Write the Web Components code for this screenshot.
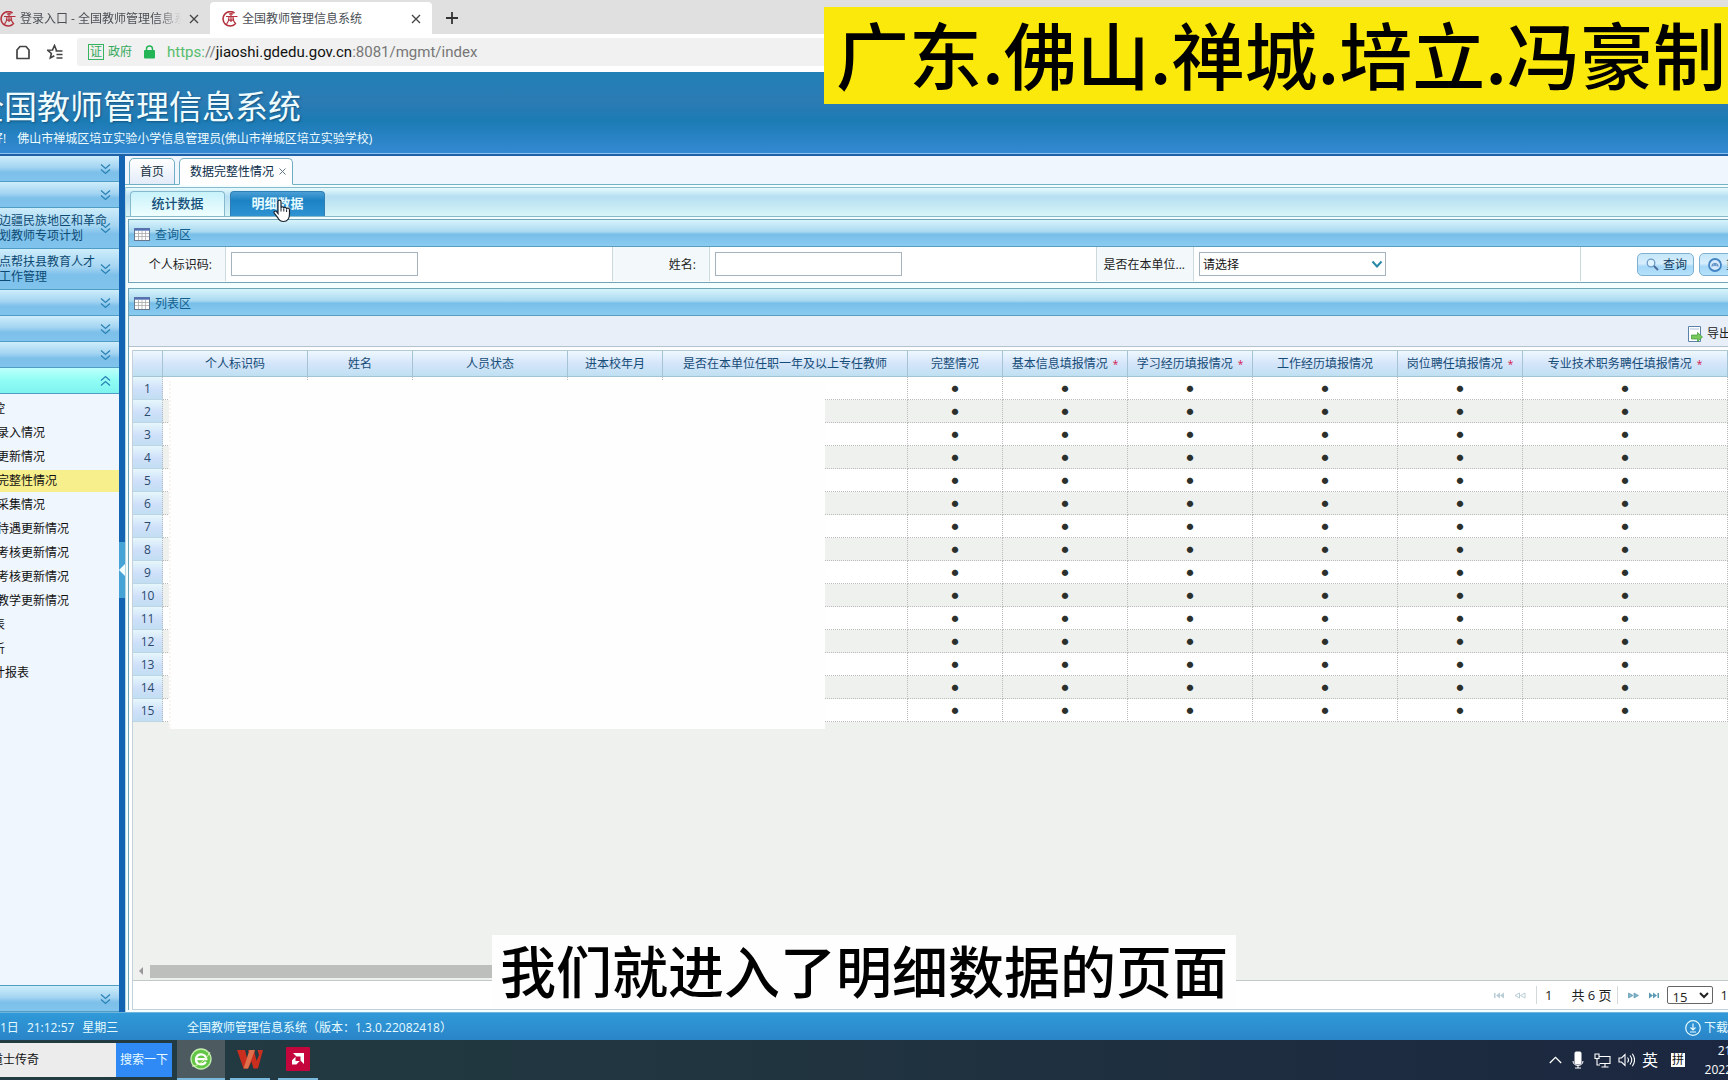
<!DOCTYPE html>
<html lang="zh-CN">
<head>
<meta charset="utf-8">
<title>全国教师管理信息系统</title>
<style>
  html, body { margin: 0; height: 100%; overflow: hidden; }
  body { font: 12px/16px "Open Sans", "Noto Sans CJK SC", sans-serif; color: #111; }
</style>
</head>
<body>
<desk-screen></desk-screen>
<script>
const define = (name, html, setup) => {
  const template = document.createElement('template');
  template.innerHTML = `<style>
    *, *::before, *::after { box-sizing: border-box; }
    :host { display: block; box-sizing: border-box; }
    :host([hidden]) { display: none; }
    button, input, select { font: inherit; color: inherit; margin: 0; }
    a { color: inherit; text-decoration: none; }
    svg { display: block; flex: none; }
  </style>` + html;
  customElements.define(name, class extends HTMLElement {
    constructor() {
      super();
      this.attachShadow({ mode: 'open' }).append(template.content.cloneNode(true));
    }
    connectedCallback() { if (setup) setup(this.shadowRoot, this); }
  });
};

/* ---------- browser chrome ---------- */
define('site-badge', `<style>:host { width: 16px; height: 16px; flex: none; }</style>
  <svg width="16" height="16" viewBox="0 0 16 16" fill="none" stroke="#b3303c">
    <path d="M12.500 2A7.200 7.200 0 1 0 13.200 13" stroke-width="1.600"/>
    <path d="M4 5.500h11.500M7 3.200q2-1.200 4 0M9 3v2.500M7 6q0 4.500-2.400 7M11 6q0 4.500 3 7M6.500 9.200h5M9 6v5" stroke-width="1.200"/>
  </svg>`);

define('browser-tab', `<style>
    :host { display: flex; align-items: center; gap: 4px; height: 32px; padding: 2px 7px 0 0; color: #4b4f55; }
    :host([active]) { background: #fff; border-radius: 4px 4px 0 0; padding: 2px 7px 0 12px; }
    .name { flex: 1; overflow: hidden; white-space: nowrap; }
    :host([fade]) .name { -webkit-mask-image: linear-gradient(to right, #000 86%, transparent); mask-image: linear-gradient(to right, #000 86%, transparent); }
    button { border: 0; background: none; padding: 4px; }
  </style>
  <site-badge></site-badge><span class="name"><slot></slot></span>
  <button aria-label="关闭"><svg width="10" height="10" viewBox="0 0 10 10" stroke="#444" stroke-width="1.3"><path d="M1 1l8 8M9 1l-8 8"/></svg></button>`);

define('browser-bar', `<style>
    :host { background: #fff; flex: none; }
    .tabs { height: 34px; background: #e0e0e0; display: flex; align-items: flex-end; }
    .tabs browser-tab { width: 210px; }
    .tabs browser-tab[active] { width: 222px; }
    .add { border: 0; background: none; height: 32px; padding: 0 14px; }
    .nav { height: 38px; display: flex; align-items: center; padding-bottom: 2px; }
    .icons { display: flex; gap: 16px; padding: 0 14px 0 15px; }
    .icons button { border: 0; background: none; padding: 0; }
    .url { flex: 1; height: 28px; background: #f0f1f0; border-radius: 3px; display: flex; align-items: center; padding: 0 11px; color: #37a95c; }
    .cert { border: 1px solid #37b45f; width: 16px; height: 16px; line-height: 14px; text-align: center; margin-right: 4px; }
    .lock { margin: 0 12px; }
    .addr { font-family: Roboto, sans-serif; font-size: 15px; line-height: 20px; color: #777; }
    .addr i { font-style: normal; color: #55bd6d; }
    .addr b { font-weight: 400; color: #111; }
  </style>
  <div class="tabs">
    <browser-tab fade>登录入口 - 全国教师管理信息系</browser-tab>
    <browser-tab active>全国教师管理信息系统</browser-tab>
    <button class="add" aria-label="新标签页"><svg width="12" height="12" viewBox="0 0 12 12" stroke="#333" stroke-width="1.8"><path d="M6 0v12M0 6h12"/></svg></button>
  </div>
  <div class="nav">
    <div class="icons">
      <button aria-label="主页"><svg width="16" height="16" viewBox="0 0 16 16" fill="none" stroke="#444" stroke-width="1.7" stroke-linejoin="round"><path d="M2 14.500V6L5 2.500h6L14 6v8.500z"/></svg></button>
      <button aria-label="收藏"><svg width="16" height="16" viewBox="0 0 16 16" fill="none" stroke="#444" stroke-width="1.6"><path d="M9.500 6.500 7.500 1.500 5.500 6 .8 6.300l3.600 3.200L3.300 14l4-2.300M8.500 7h7M9.500 10.500h6M9.500 14h6"/></svg></button>
    </div>
    <div class="url">
      <span class="cert">证</span><span>政府</span>
      <svg class="lock" width="11" height="14" viewBox="0 0 11 14"><rect y="5" width="11" height="8.500" rx="1" fill="#22b455"/><path d="M2.500 6V4a3 3 0 0 1 6 0v2" fill="none" stroke="#22b455" stroke-width="1.400"/></svg>
      <span class="addr"><i>https:</i>//<b>jiaoshi.gdedu.gov.cn</b>:8081/mgmt/index</span>
    </div>
  </div>`);

/* ---------- application header ---------- */
define('app-header', `<style>
    :host { flex: none; height: 84px; color: #effcff; overflow: hidden; white-space: nowrap; border-bottom: 2px solid #2060a6; box-shadow: inset 0 -1px #8cc4f0;
      background: linear-gradient(#2080b6, #2c7bb4 35%, #1c7bb4 60%, #3489d2 98%); }
    h1 { margin: 14px 0 0 -29px; font-size: 33px; line-height: 42px; font-weight: 400; text-shadow: 1px 1px 2px #145580; }
    p { margin: 2px 0 0 -9px; display: flex; gap: 11px; line-height: 18px; }
  </style>
  <h1>全国教师管理信息系统</h1>
  <p><span>好!</span><span>佛山市禅城区培立实验小学信息管理员(佛山市禅城区培立实验学校)</span></p>`);

/* ---------- side navigation ---------- */
define('nav-group', `<style>
    :host { flex: none; }
    button { display: flex; align-items: center; width: 100%; height: 26px; padding: 0 8px 0 0; border: 0; border-bottom: 1px solid #4f9cc4; overflow: hidden;
      background: linear-gradient(#cdedfb, #a5d5f2 45%, #7dc0ea 65%, #80c4ee); color: #0d4a73; text-align: left; line-height: 15px; }
    :host([tall]) button { height: 41px; }
    :host([open]) button { background: linear-gradient(#bdfffb, #8ffdf5 50%, #80f3ef); }
    :host([open]) svg { transform: scaleY(-1); }
    span { flex: 1; margin: 0 -12px 0 -1px; white-space: nowrap; }
  </style>
  <button><span><slot></slot></span><svg width="11" height="12" viewBox="0 0 11 12" fill="none" stroke="#2b82b5" stroke-width="1.300"><path d="M1 1.500l4.500 4 4.500-4M1 6.500l4.500 4 4.500-4"/></svg></button>`);

define('nav-item', `<style>
    :host { height: 24px; flex: none; padding-top: 1px; }
    a { display: block; height: 22px; line-height: 22px; color: #111; white-space: nowrap; overflow: hidden; }
    :host([current]) a { background: #f7ee8c; }
    span { margin-left: -3px; }
    :host([top]) span { margin-left: -7px; }
  </style><a href="#"><span><slot></slot></span></a>`);

define('side-nav', `<style>
    :host { display: flex; flex-direction: column; width: 119px; background: #f0f6fd; overflow: hidden; flex: none; }
    nav { flex: 1; padding-top: 3px; }
    nav + nav-group { border-top: 1px solid #4f9cc4; }
  </style>
  <nav-group></nav-group><nav-group></nav-group>
  <nav-group tall>边疆民族地区和革命<br>划教师专项计划</nav-group>
  <nav-group tall>点帮扶县教育人才<br>工作管理</nav-group>
  <nav-group></nav-group><nav-group></nav-group><nav-group></nav-group><nav-group open></nav-group>
  <nav>
    <nav-item top>控</nav-item><nav-item>录入情况</nav-item><nav-item>更新情况</nav-item>
    <nav-item current>完整性情况</nav-item><nav-item>采集情况</nav-item><nav-item>待遇更新情况</nav-item>
    <nav-item>考核更新情况</nav-item><nav-item>考核更新情况</nav-item><nav-item>教学更新情况</nav-item>
    <nav-item top>表</nav-item><nav-item top>析</nav-item><nav-item top>计报表</nav-item>
  </nav>
  <nav-group></nav-group>`);

define('split-bar', `<style>
    :host { display: flex; align-items: center; width: 6px; background: #1263b2; flex: none; }
    button { width: 6px; height: 56px; margin-bottom: 28px; padding: 0; border: 0; background: #45a3d6; margin-top: 0; }
  </style>
  <button aria-label="收起菜单"><svg width="6" height="12" viewBox="0 0 6 12"><path d="M0 6l6-6v12z" fill="#f2ffff"/></svg></button>`);

/* ---------- tabs above the page ---------- */
define('page-tabs', `<style>
    :host { display: flex; gap: 4px; height: 29px; padding: 2px 0 0 4px; background: #f0f6fd; border-bottom: 1px solid #70b3c4; flex: none; }
    button { height: 27px; padding: 0 10px; border: 1px solid #70aec4; border-radius: 5px 5px 0 0; background: linear-gradient(#fff, #e3ebf9); color: #17303f; display: flex; align-items: center; gap: 5px; }
    .on { background: #fff; border-bottom-color: #fff; padding: 0 6px 0 10px; color: #082b48; }
    svg { stroke: #678; }
  </style>
  <button>首页</button>
  <button class="on">数据完整性情况<svg width="7" height="7" viewBox="0 0 7 7"><path d="M.5.5l6 6M6.500.5l-6 6"/></svg></button>`);

define('view-tabs', `<style>
    :host { display: flex; gap: 5px; height: 30px; padding: 3px 0 0 4px; flex: none; border-top: 1px solid #86b9cc; border-bottom: 1px solid #86b9cc;
      background: linear-gradient(#e8fbfd, #b6dff2 30%, #c8ebf5 70%, #d8f5f8); position: relative; }
    button { width: 95px; height: 25px; padding: 0 0 2px; border: 1px solid #86b9cc; border-bottom: 0; border-radius: 4px 4px 0 0; font-size: 13px; font-weight: 500; background: linear-gradient(#c8f2fb, #effefe); color: #15507a; }
    .on { background: linear-gradient(#4c9fd6, #1c82c4 35%, #2f93d2); border-color: #2f7fb4; color: #e6fbff; font-weight: 700; }
    .hand { position: absolute; left: 147px; top: 11px; z-index: 2; }
  </style>
  <button>统计数据</button><button class="on">明细数据</button>
  <svg class="hand" width="18" height="24" viewBox="0 0 18 24"><path d="M5 14.500V2.500C5 .6 8 .6 8 2.500V9c0-1.700 2.800-1.500 2.800.3 0-1.500 2.800-1.300 2.800.6 0-1.300 2.900-1.200 2.900.8V15c0 4-1.700 7.500-6 7.500-3.500 0-4.800-1.800-6-4.200L1.200 14c-.8-1.700 1.400-2.700 2.400-1.300z" fill="#fff" stroke="#1a2430" stroke-width="1.200"/><path d="M8 9v3.500M10.800 9.500v3M13.600 10.300v2.700" stroke="#1a2430" stroke-width="1"/></svg>`);

/* ---------- panels ---------- */
define('title-panel', `<style>
    :host { display: flex; flex-direction: column; border: 1px solid #70a5b8; border-right: 0; background: #fff; overflow: hidden; }
    h2 { margin: 0; height: 27px; flex: none; padding: 3px 0 0 5px; display: flex; align-items: center; gap: 5px; font-size: 12px; line-height: 16px; font-weight: 400; color: #11608f;
      border-bottom: 1px solid #5a9dbd; background: linear-gradient(#d7f4fb, #aad9f0 45%, #78bfe8 55%, #8acbf1); }
  </style>
  <h2><svg width="16" height="13" viewBox="0 0 16 13"><rect x=".5" y=".5" width="15" height="12" fill="#fff" stroke="#667790"/><path d="M0 1.500h16" stroke="#5571b5" stroke-width="2.400"/><path d="M1 5.500h14M1 8.500h14M4.500 3v9M8 3v9M11.500 3v9" stroke="#a9a9a9" stroke-width=".8"/></svg><slot name="title"></slot></h2>
  <slot></slot>`);

define('query-field', `<style>
    :host { display: flex; flex: none; width: 484px; border-right: 1px solid #ccd9dd; white-space: nowrap; }
    label { width: 97px; flex: none; padding: 2px 13px 0 0; border-right: 1px solid #ccd9dd; background: #f3f8fb; display: flex; align-items: center; justify-content: flex-end; color: #222; }
    :host([kind=select]) label { padding-right: 8px; }
    .box { display: flex; align-items: center; padding-left: 5px; position: relative; }
    input, select { width: 187px; height: 24px; border: 1px solid #a5b3bf; background: #fff; padding: 2px 3px 0; border-radius: 0; appearance: none; }
    svg { position: absolute; right: 3px; top: 13px; pointer-events: none; }
    :host([kind=text]) svg { display: none; }
  </style>
  <label><slot></slot></label>
  <div class="box"><input id="t" type="text"><select id="s"><option>请选择</option></select>
    <svg width="12" height="9" viewBox="0 0 12 9" fill="none" stroke="#2787a8" stroke-width="2"><path d="M1.500 1.500l4.500 5 4.500-5"/></svg></div>`,
  (root, host) => {
    const select = host.getAttribute('kind') === 'select';
    root.querySelector(select ? '#t' : '#s').remove();
    root.querySelector('label').htmlFor = select ? 's' : 't';
  });

define('glossy-button', `<style>
    :host { flex: none; }
    button { height: 23px; padding: 0 6px 0 8px; display: flex; align-items: center; gap: 4px; border: 1px solid #7fb0d0; border-radius: 5px; background: linear-gradient(#c5e7fa, #d6edfc 45%, #a6d8f8 60%, #b5e1fa); color: #123f63; white-space: nowrap; }
  </style><button><slot name="icon"></slot><span><slot></slot></span></button>`);

define('query-form', `<style>
    :host { height: 35px; }
    form { display: flex; height: 34px; }
    .acts { display: flex; align-items: center; gap: 5px; padding: 1px 0 0 56px; }
  </style>
  <form>
    <query-field kind="text">个人标识码:</query-field>
    <query-field kind="text">姓名:</query-field>
    <query-field kind="select">是否在本单位...</query-field>
    <div class="acts">
      <glossy-button><svg slot="icon" width="13" height="13" viewBox="0 0 13 13" fill="none"><circle cx="5" cy="5" r="3.800" fill="#dff3ff" stroke="#6d9dc8" stroke-width="1.300"/><path d="M8 8l4 4" stroke="#4d6c9a" stroke-width="2"/></svg>查询</glossy-button>
      <glossy-button><svg slot="icon" width="14" height="14" viewBox="0 0 14 14" fill="none"><circle cx="7" cy="7" r="6" fill="#d5e9fb" stroke="#4384c4" stroke-width="1.800"/><path d="M4 8.500a3 3 0 1 1 6 0M5.500 8L7 6.500 8.500 8" stroke="#5b8cc4" stroke-width="1.200"/></svg>重置</glossy-button>
    </div>
  </form>`);

define('grid-tools', `<style>
    :host { display: flex; justify-content: flex-end; align-items: center; height: 31px; background: #e8eff8; border-bottom: 1px solid #b4c3cb; flex: none; }
    button { border: 0; background: none; padding: 5px 0 0; margin-right: -3px; display: flex; align-items: center; gap: 4px; white-space: nowrap; color: #222; }
  </style>
  <button><svg width="16" height="16" viewBox="0 0 16 16"><path d="M1.500.5h12v15h-12z" fill="#fff" stroke="#5b82a8"/><path d="M3 3h9" stroke="#a9c1dc"/><path d="M4.500 9h6V6.500L15.500 11l-5 4.500V13h-6z" fill="#79c85a" stroke="#3c9a3c" stroke-width=".7"/></svg>导出</button>`);

define('record-grid', `<style>
    :host { flex: 1; min-height: 0; margin: 3px 0 0 3px; background: #eff1ef; border-left: 1px solid #c3d2da; border-bottom: 1px solid #c3c9c8; display: flex; flex-direction: column; justify-content: space-between; position: relative; overflow: hidden; }
    table { border-collapse: separate; border-spacing: 0; table-layout: fixed; width: 1640px; border-top: 1px solid #b4c9d6; }
    th { height: 26px; padding: 1px 0 0; font-weight: 400; color: #154c77; white-space: nowrap; border-right: 1px solid #a4c4d4; border-bottom: 1px solid #a4c4d4; background: linear-gradient(#eef8fe, #d5e5fa 50%, #bfe0f2); }
    th em { font-style: normal; font-size: 10px; color: #d3124b; margin-left: 5px; }
    td { height: 23px; padding: 2px 0 0; text-align: center; border-right: 1px dotted #bbb; border-bottom: 1px dotted #bbb; font-size: 7px; line-height: 12px; color: #2c302c; background: #fff; }
    tr:nth-child(even) td { background: #eff1ef; }
    tr td:first-child { font-size: 12px; line-height: 16px; color: #2a4a6c; background: linear-gradient(#e6f7fc, #cfe0fa 55%, #c2def2); border-bottom: 1px solid #bcd6e6; }
    .mask { position: absolute; left: 36px; top: 31px; width: 656px; height: 348px; background: #fefefe; border-left: 2px dotted #fbf4f1; }
    .bar { display: flex; align-items: center; gap: 7px; height: 16px; padding: 0 0 2px 6px; }
    .bar i { width: 850px; height: 13px; background: #bdbfbd; }
  </style>
  <table>
    <colgroup></colgroup>
    <thead><tr></tr></thead><tbody></tbody>
  </table>
  <div class="mask"></div>
  <div class="bar"><svg width="4" height="8" viewBox="0 0 4 8"><path d="M4 0v8L0 4z" fill="#999"/></svg><i></i></div>`,
  root => {
    const cols = [['', 30], ['个人标识码', 145], ['姓名', 105], ['人员状态', 155], ['进本校年月', 95],
      ['是否在本单位任职一年及以上专任教师', 245], ['完整情况', 95], ['基本信息填报情况*', 125],
      ['学习经历填报情况*', 125], ['工作经历填报情况', 145], ['岗位聘任填报情况*', 125],
      ['专业技术职务聘任填报情况*', 205], ['', 45]];
    root.querySelector('colgroup').innerHTML = cols.map(c => `<col style="width:${c[1]}px">`).join('');
    root.querySelector('thead tr').innerHTML = cols.map(c => `<th>${c[0].replace('*', '<em>*</em>')}</th>`).join('');
    root.querySelector('tbody').innerHTML = Array.from({ length: 15 }, (_, i) =>
      `<tr><td>${i + 1}</td>` + cols.slice(1).map((_, k) => `<td>${k > 4 && k < 11 ? '●' : ''}</td>`).join('') + '</tr>').join('');
  });

define('pager-bar', `<style>
    :host { display: flex; justify-content: flex-end; align-items: center; height: 29px; margin-left: 3px; border-left: 1px solid #c3d2da; border-bottom: 1px solid #c3d2da; flex: none; white-space: nowrap; color: #222; font-size: 13px; }
    button { border: 0; background: none; padding: 0; margin: 0 10px 0 0; }
    i { width: 1px; height: 18px; background: #d3dadc; }
    .num { padding: 0 19px 0 8px; }
    .total { padding-right: 5px; }
    .go { margin-left: 10px; margin-right: 0; }
    select { width: 46px; height: 18px; margin: 0 8px; padding: 0 0 0 1px; border: 1px solid #666; border-radius: 2px; background: #fff; line-height: 16px; }
  </style>
  <button aria-label="首页"><svg width="10" height="7" viewBox="0 0 10 7" fill="#b9cdd6"><path d="M0 1h1.500v5H0zM6 .5v6L2 3.500zM10 .5v6L6 3.500z"/></svg></button>
  <button aria-label="上一页"><svg width="12" height="7" viewBox="0 0 12 7" fill="none" stroke="#b9cdd6"><path d="M5.500 1L1 3.500 5.500 6zM11 1L6.500 3.500 11 6z"/></svg></button>
  <i></i><span class="num">1</span><span class="total">共 6 页</span><i></i>
  <button class="go" aria-label="下一页"><svg width="11" height="7" viewBox="0 0 11 7" fill="#82b3c6" stroke="#5b9ab3" stroke-width=".7"><path d="M.5 1L5 3.500.5 6zM6 1l4.500 2.500L6 6z"/></svg></button>
  <button class="go" aria-label="末页"><svg width="10" height="7" viewBox="0 0 10 7" fill="#5b9ab3"><path d="M0 .5v6l4-3zM4 .5v6l4-3zM8.500 1H10v5H8.500z"/></svg></button>
  <select aria-label="每页条数"><option>15</option></select><span>1</span>`);

define('status-bar', `<style>
    :host { display: flex; align-items: center; height: 28px; padding-top: 3px; flex: none; background: linear-gradient(#309ad9, #2a84c8); border-top: 1px solid #6fb4dd; color: #e6fbff; white-space: nowrap; overflow: hidden; }
    time { width: 187px; display: flex; gap: 8px; }
    p { margin: 0; flex: 1; }
    a { display: flex; align-items: center; gap: 3px; }
  </style>
  <time><span>1日</span><span>21:12:57</span><span>星期三</span></time>
  <p>全国教师管理信息系统（版本：1.3.0.22082418）</p>
  <a href="#"><svg width="16" height="16" viewBox="0 0 16 16" fill="none" stroke="#e6fbff" stroke-width="1.200"><circle cx="8" cy="8" r="7.300"/><path d="M8 3.500v6M5.500 7.500L8 10l2.500-2.500M5 12h6"/></svg>下载</a>`);

/* ---------- desktop task bar ---------- */
define('task-app', `<style>
    :host { display: flex; align-items: center; justify-content: center; width: 40px; height: 40px; flex: none; border-bottom: 2px solid #7ab8dc; }
    :host([active]) { width: 48px; background: #4d5b60; }
  </style><slot></slot>`);

define('task-bar', `<style>
    :host { display: flex; align-items: center; height: 40px; flex: none; background: linear-gradient(to right, #233c42, #20343f 45%, #1b2740); color: #fff; overflow: hidden; white-space: nowrap; }
    form { display: flex; width: 172px; overflow: hidden; height: 34px; flex: none; }
    input { width: 116px; padding: 0; border: 0; border-radius: 0; background: #ececec; color: #111; text-indent: -9px; }
    form button { flex: 1; border: 0; padding: 0; background: #2f8af5; color: #e9fbff; }
    .apps { display: flex; gap: 8px; padding-left: 5px; flex: 1; }
    task-app[active] { margin-right: -3px; }
    .tray { display: flex; align-items: center; gap: 7px; }
    .en { font-size: 16px; line-height: 20px; }
    .ime { width: 14px; height: 14px; line-height: 14px; background: #fff; color: #111; text-align: center; margin: 0 11px 0 6px; }
    .clock { width: 25px; line-height: 19px; }
    .clock span { display: flex; justify-content: center; width: 60px; }
  </style>
  <form><input type="text" value="道士传奇" aria-label="搜索"><button type="button">搜索一下</button></form>
  <div class="apps">
    <task-app active><svg width="22" height="22" viewBox="0 0 22 22"><circle cx="11" cy="11" r="10" fill="#63c544" stroke="#c4efb0" stroke-width="1.300"/><path d="M6 11.200h10.300C16 4.800 6.500 4.500 6 11.200c0 6 7.500 6.500 9.800 2.500" fill="none" stroke="#fff" stroke-width="2.300"/><path d="M2 18c3 1 13-4 18-14" stroke="#dff7b0" stroke-width="1" fill="none"/></svg></task-app>
    <task-app><svg width="26" height="20" viewBox="0 0 26 20"><path d="M0 1h8l3 12 3-7 2 4-5 9.500H6.500z" fill="#c92e1e"/><path d="M11 1h6l2.500 11L22 6l-1.500-5H26l-5 18.500h-4.500z" fill="#c92e1e"/><path d="M12.500 1H18L11 19.500H6.500z" fill="#e0704c"/></svg></task-app>
    <task-app><svg width="24" height="24" viewBox="0 0 24 24"><rect width="24" height="24" rx="1" fill="#c4063c"/><path d="M7 6h11v11l-3.500-3.500v-4h-4z" fill="#fff"/><path d="M9.500 9.800V14h4.300l-3.400 3.500H6v-4.200z" fill="#fff"/></svg></task-app>
  </div>
  <div class="tray">
    <svg width="13" height="8" viewBox="0 0 13 8" fill="none" stroke="#fff" stroke-width="1.300"><path d="M.8 7l5.700-5.700L12.200 7"/></svg>
    <svg width="18" height="18" viewBox="0 0 18 18" fill="none" stroke="#fff"><rect x="6" y="1" width="6" height="12" rx="1" fill="#fff"/><path d="M4 10c0 6 10 6 10 0M9 14v3M6 17h6"/></svg>
    <svg width="17" height="15" viewBox="0 0 17 15" fill="none" stroke="#fff" stroke-width="1.100"><path d="M5 3.500h11v7H5.500M11 10.500v3.500M7.500 14h7M1 1h4v4.500H1zM3 5.500V12h3"/></svg>
    <svg width="17" height="14" viewBox="0 0 17 14" fill="none" stroke="#fff" stroke-width="1.100"><path d="M1 5h2.500L7 1.500v11L3.500 9H1zM9.500 4.500q2 2.500 0 5M12 2.500q3.500 4.500 0 9M14.300.8q4.500 6.200 0 12.400"/></svg>
    <span class="en">英</span><span class="ime">拼</span>
    <div class="clock"><span>21:12</span><span>2022/8/31</span></div>
  </div>`);

/* ---------- captions laid over the recording ---------- */
define('video-caption', `<style>
    :host { position: absolute; z-index: 5; white-space: nowrap; color: #000; font-family: "Noto Sans CJK SC", sans-serif; font-weight: 500; }
    :host([kind=banner]) { top: 7px; right: 0; height: 97px; width: 904px; padding-left: 12px; background: #fbe90c; font-size: 73px; line-height: 91px; overflow: hidden; }
    :host([kind=subtitle]) { left: 492px; bottom: 72px; height: 73px; padding: 0 8px; background: #fefefe; font-size: 56px; line-height: 68px; }
  </style><slot></slot>`);

define('desk-screen', `<style>
    :host { display: flex; flex-direction: column; height: 100vh; position: relative; overflow: hidden; background: #fff; }
    .work { flex: 1; min-height: 0; display: flex; }
    main { flex: 1; min-width: 0; display: flex; flex-direction: column; background: #f5feff; }
    .page { flex: 1; min-height: 0; display: flex; flex-direction: column; margin-top: 2px; border-left: 1px solid #b5d5e0; }
    .panels { flex: 1; min-height: 0; display: flex; flex-direction: column; gap: 5px; padding: 2px 0 2px 2px; }
    .list { flex: 1; min-height: 0; border-bottom: 0; }
    .query { flex: none; }
  </style>
  <browser-bar></browser-bar>
  <app-header></app-header>
  <div class="work">
    <side-nav></side-nav><split-bar></split-bar>
    <main>
      <page-tabs></page-tabs>
      <div class="page">
        <view-tabs></view-tabs>
        <div class="panels">
          <title-panel class="query"><span slot="title">查询区</span><query-form></query-form></title-panel>
          <title-panel class="list"><span slot="title">列表区</span>
            <grid-tools></grid-tools><record-grid></record-grid><pager-bar></pager-bar>
          </title-panel>
        </div>
      </div>
    </main>
  </div>
  <status-bar></status-bar>
  <task-bar></task-bar>
  <video-caption kind="banner">广东.佛山.禅城.培立.冯豪制</video-caption>
  <video-caption kind="subtitle">我们就进入了明细数据的页面</video-caption>`);
</script>
</body>
</html>
